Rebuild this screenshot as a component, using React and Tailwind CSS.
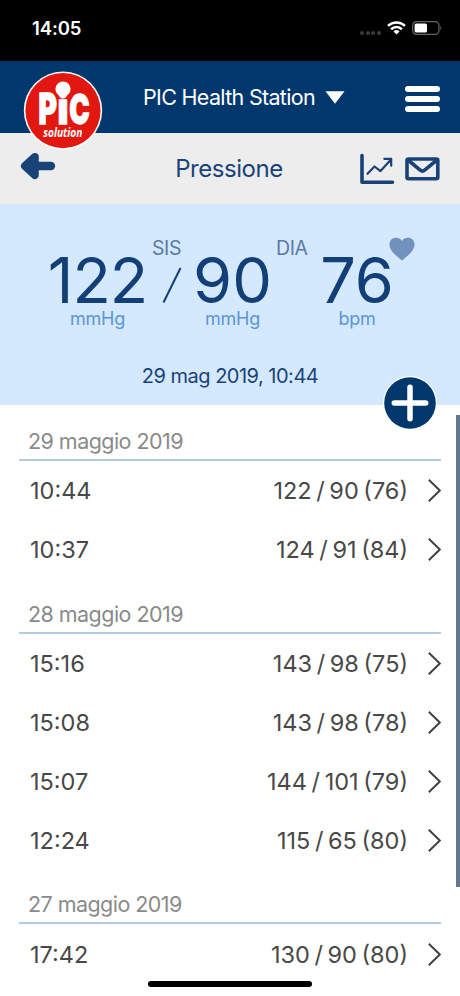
import React from 'react';

const groups = [
    {
        date: '29 maggio 2019',
        items: [
            { time: '10:44', value: '122 / 90 (76)' },
            { time: '10:37', value: '124 / 91 (84)' },
        ],
    },
    {
        date: '28 maggio 2019',
        items: [
            { time: '15:16', value: '143 / 98 (75)' },
            { time: '15:08', value: '143 / 98 (78)' },
            { time: '15:07', value: '144 / 101 (79)' },
            { time: '12:24', value: '115 / 65 (80)' },
        ],
    },
    {
        date: '27 maggio 2019',
        items: [{ time: '17:42', value: '130 / 90 (80)' }],
    },
];

const Logo = () => (
    <svg className="w-[80px] h-[80px]" viewBox="0 0 80 80">
        <circle cx="40" cy="39.6" r="39.2" fill="#fff" />
        <circle cx="40" cy="39.6" r="37.6" fill="#e2170f" />
        <g fill="#fff" fontFamily="Inter, sans-serif" fontWeight="900" stroke="#fff" strokeWidth="1.3">
            <text x="15.4" y="53.2" fontSize="42" textLength="18.4" lengthAdjust="spacingAndGlyphs">P</text>
            <text x="34.4" y="53.2" fontSize="44" textLength="11" lengthAdjust="spacingAndGlyphs">i</text>
            <text x="46.2" y="53.2" fontSize="41" textLength="20.4" lengthAdjust="spacingAndGlyphs">C</text>
        </g>
        <circle cx="40" cy="18" r="7.6" fill="#fff" />
        <text x="20.2" y="65.5" fill="#fff" fontFamily="'Open Sans', sans-serif" fontStyle="italic" fontWeight="700" fontSize="12" textLength="39.2" lengthAdjust="spacingAndGlyphs">solution</text>
    </svg>
);

const StatusBar = () => (
    <div className="h-[61px] bg-black text-white flex items-start justify-between pl-8 pr-[18px] pt-[18px]">
        <span className="text-[18.5px] leading-[21px] font-semibold tracking-[-0.1px]">14:05</span>
        <div className="flex items-center gap-[6px] pt-[3px]">
            <div className="flex gap-[1.7px] pt-[9px]">
                {[0, 1, 2, 3].map((i) => (
                    <span key={i} className="w-[4px] h-[4px] rounded-full bg-[#3c3c3c]" />
                ))}
            </div>
            <svg className="w-[19px] h-[14px]" viewBox="0 0 19 14" fill="none" stroke="#fff" strokeWidth="2.6">
                <path d="M1 4.9a12.2 12.2 0 0 1 17 0" />
                <path d="M4.1 8.2a7.8 7.8 0 0 1 10.8 0" />
                <path d="M9.5 13.6l-3-3.2a4.4 4.4 0 0 1 6 0z" fill="#fff" stroke="none" />
            </svg>
            <svg className="w-[30px] h-[14px]" viewBox="0 0 30 14">
                <rect x="0.7" y="0.7" width="26.2" height="12.6" rx="3.6" fill="none" stroke="#666" strokeWidth="1.2" />
                <rect x="2.6" y="2.5" width="12.4" height="9" rx="1.6" fill="#fff" />
                <path d="M28.3 4.8c1.3.7 1.3 3.7 0 4.4z" fill="#666" />
            </svg>
        </div>
    </div>
);

const TopBar = () => (
    <div className="relative h-[72px] bg-[#00386e] text-white flex items-center justify-between pl-[143px] pr-[20px]">
        <div className="absolute left-[23px] top-[10px] z-10">
            <Logo />
        </div>
        <button className="flex items-center gap-[10px]">
            <span className="text-[21.5px] leading-6 tracking-[-0.68px] whitespace-nowrap">PIC Health Station</span>
            <svg className="w-[20px] h-[13px]" viewBox="0 0 20 13" fill="#fff">
                <path d="M0.5 0.3h19L10 12.8z" />
            </svg>
        </button>
        <button className="flex flex-col gap-1 pt-[3px]">
            <span className="w-[35px] h-[6px] rounded-full bg-white" />
            <span className="w-[35px] h-[6px] rounded-full bg-white" />
            <span className="w-[35px] h-[6px] rounded-full bg-white" />
        </button>
    </div>
);

const TitleBar = () => (
    <div className="h-[71px] bg-[#ededed] text-[#194378] flex items-center justify-between pl-[20px] pr-[20px]">
        <svg className="w-[36px] h-[28px] -mt-[5px]" viewBox="0 0 36 28" fill="none" stroke="#194378" strokeLinecap="round" strokeLinejoin="round">
            <path d="M6 14h25" strokeWidth="8.4" />
            <path d="M14.8 5L5 14l9.8 9z" strokeWidth="8" fill="#194378" />
        </svg>
        <h1 className="text-[24px] leading-7 pl-[43px] tracking-[-0.45px]">Pressione</h1>
        <div className="flex items-center gap-[10px]">
            <svg className="w-[36px] h-[32px]" viewBox="0 0 36 32" fill="none" stroke="#194378" strokeLinecap="round" strokeLinejoin="round">
                <path d="M3 2.5v26.8h30.5" strokeWidth="3.6" />
                <path d="M8.5 20.8l7-7.3 6 4.6L32 6.5M25.3 5.8h6.9v6.9" strokeWidth="2.2" />
            </svg>
            <svg className="w-[35px] h-[24px]" viewBox="0 0 35 24" fill="none" stroke="#194378" strokeWidth="3.6" strokeLinejoin="round">
                <rect x="2" y="2" width="30.8" height="19.8" rx="1.5" />
                <path d="M3 3l12.2 10.2c1.5 1.2 3 1.2 4.5 0L31.9 3" />
            </svg>
        </div>
    </div>
);

const Reading = ({ value, unit, className }) => (
    <div className={`flex flex-col items-center ${className}`}>
        <span className="text-[63px] leading-[58px]">{value}</span>
        <span className="text-[18px] leading-5 tracking-[-0.2px] text-[#5b96d5]">{unit}</span>
    </div>
);

const Summary = () => (
    <div className="relative h-[201px] bg-[#d4e8fe] text-[#123f77] flex flex-col items-center">
        <div className="w-full h-[126px] pt-[43px] pl-[48px] flex items-start">
            <Reading value="122" unit="mmHg" className="w-[99px] tracking-[-1px] pt-[4px]" />
            <div className="w-[46px] -mt-[11px] flex flex-col items-start">
                <span className="text-[19.5px] leading-6 pl-[5px] tracking-[-0.4px] text-[#5b7ba5]">SIS</span>
                <svg className="w-[20px] h-[36px] mt-[7px] ml-[15px]" viewBox="0 0 20 36" stroke="#123f77" strokeWidth="2">
                    <path d="M1.5 35.5L18.5 1" />
                </svg>
            </div>
            <Reading value="90" unit="mmHg" className="w-[79px] pt-[4px]" />
            <span className="-mt-[11px] w-[48px] pl-[4px] text-[19.5px] leading-6 tracking-[-0.4px] text-[#5b7ba5]">DIA</span>
            <Reading value="76" unit="bpm" className="w-[74px] pt-[4px]" />
            <svg className="w-[26px] h-[24px] -mt-[10px] -ml-[5px]" viewBox="0 0 26 24" fill="#7092bc">
                <path d="M13 23.5C9 20 .5 14.5 .5 7.5 .5 3.5 3.5 .8 7 .8c2.5 0 4.7 1.2 6 3.2C14.3 2 16.5.8 19 .8c3.5 0 6.5 2.7 6.5 6.7C25.5 14.5 17 20 13 23.5z" />
            </svg>
        </div>
        <span className="mt-[34px] text-[20px] leading-6 tracking-[-0.5px] text-[#194378]">29 mag 2019, 10:44</span>
        <button className="absolute left-[383px] top-[172px] w-[54px] h-[54px] rounded-full bg-white flex items-center justify-center z-10">
            <svg className="w-[52px] h-[52px]" viewBox="0 0 52 52">
                <circle cx="26" cy="26" r="25.8" fill="#00386e" />
                <path d="M26 10.3v31.4M10.3 26h31.4" stroke="#fff" strokeWidth="5.5" strokeLinecap="round" />
            </svg>
        </button>
    </div>
);

const App = () => {
    return (
        <div className="relative w-[460px] h-[996px] overflow-hidden bg-white flex flex-col font-['Inter',sans-serif]">
            <StatusBar />
            <TopBar />
            <TitleBar />
            <Summary />

            {/* elenco misurazioni */}
            <div className="pl-[19px] pr-[19px] pt-[1px]">
                {groups.map((group) => (
                    <section key={group.date}>
                        <h2 className="h-[55px] pt-[21px] pl-[9px] border-b-2 border-[#b3cae1] text-[21.5px] leading-7 tracking-[-0.55px] text-[#8a8a8a]">
                            {group.date}
                        </h2>
                        {group.items.map((item) => (
                            <div key={item.time} className="h-[58.9px] pt-px flex items-center text-[23.5px] text-[#484848]">
                                <span className="pl-[11px]">{item.time}</span>
                                <span className="ml-auto mr-[20px] [word-spacing:-2px]">{item.value}</span>
                                <svg className="w-[13px] h-[23px]" viewBox="0 0 13 23" fill="none" stroke="#3f3f3f" strokeWidth="1.9">
                                    <path d="M.8.8l11 10.7L.8 22.2" />
                                </svg>
                            </div>
                        ))}
                    </section>
                ))}
            </div>

            {/* barra di scorrimento */}
            <div className="absolute right-0 top-[415px] w-[4px] h-[472px] bg-[#62788f]" />
            <div className="absolute left-[148px] top-[981px] w-[164px] h-[6px] rounded-full bg-black" />
        </div>
    );
};

export default App;
